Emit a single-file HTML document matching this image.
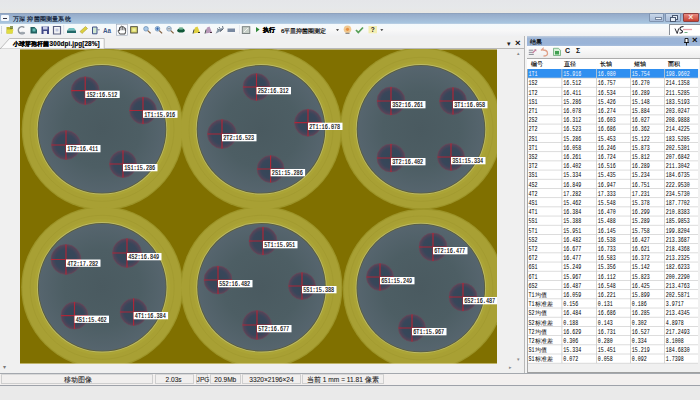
<!DOCTYPE html>
<html><head><meta charset="utf-8"><style>
*{margin:0;padding:0}
body{width:700px;height:400px;overflow:hidden;position:relative;background:#ebebeb;font-family:"Liberation Sans",sans-serif;font-size:6px}
div{position:absolute}
.th{font-size:6.2px;color:#000;-webkit-text-stroke:0.12px #000;line-height:8px;white-space:nowrap}
.sp{top:374.3px;height:10px;border:0.6px solid #cfcfcf;border-top-color:#d8d8d8;box-sizing:border-box;background:#f1efee}
.st{top:375.3px;font-size:6.6px;line-height:9px;color:#222;-webkit-text-stroke:0.08px #222;white-space:nowrap}
.td{font-family:"Liberation Serif",serif;font-size:6.3px;-webkit-text-stroke:0.2px currentColor;line-height:7px;white-space:nowrap}
</style></head><body>
<!-- top band -->
<div style="left:0;top:0;width:700px;height:12.8px;background:linear-gradient(#e5e6e9,#e6e8ea 60%,#e9e7e3)"></div>
<!-- title bar -->
<div style="left:0;top:12.8px;width:700px;height:11px;background:linear-gradient(#8a9cb6,#96acca 12%,#a0b8d4 50%,#a8c6e0 92%,#c8d6e6)"></div>
<div style="left:1px;top:15px;width:8px;height:6px;background:#f4f7fb;border-radius:1px"></div>
<div style="left:3px;top:17.5px;width:4px;height:1px;background:#334"></div>
<div style="left:13px;top:13.5px;font-size:6.2px;color:#0e1a34;-webkit-text-stroke:0.2px #0e1a34;line-height:9px;white-space:nowrap;letter-spacing:0.2px">万深 抑菌圈测量系统</div>
<div style="left:649px;top:13px;width:15px;height:8.7px;background:linear-gradient(#c8d6e8,#a8bcd8);border:0.5px solid #8094b0;box-sizing:border-box;border-radius:1px"></div>
<div style="left:654.5px;top:16.8px;width:5.5px;height:1.5px;background:#f4f6fa;border:0.5px solid #7888a0"></div>
<div style="left:665px;top:13px;width:16px;height:8.7px;background:linear-gradient(#c8d6e8,#a8bcd8);border:0.5px solid #8094b0;box-sizing:border-box;border-radius:1px"></div>
<div style="left:672px;top:15.2px;width:3.5px;height:2.8px;background:#e8eef6;border:0.6px solid #4a5870"></div>
<div style="left:670.3px;top:16.8px;width:3.5px;height:2.8px;background:#e8eef6;border:0.6px solid #4a5870"></div>
<div style="left:683px;top:13px;width:16px;height:8.7px;background:linear-gradient(#e88a80,#c84030);border:0.5px solid #904040;box-sizing:border-box;border-radius:1px"></div>
<div style="left:688.3px;top:12.8px;font-size:8.5px;line-height:9px;color:#f8e8e0;font-weight:bold">×</div>
<!-- toolbar -->
<div style="left:0;top:23.8px;width:700px;height:12.9px;background:linear-gradient(#f4fafc,#f8f8f8 50%,#eff0f2);border-bottom:1px solid #b8bcc2;box-sizing:border-box"></div>
<div style="left:669px;top:24.2px;width:31px;height:11px;background:#fff;border-left:0.8px solid #8a9098;border-top:0.8px solid #8a9098;box-sizing:border-box"></div>
<svg width="31" height="11" style="position:absolute;left:669px;top:24px"><path d="M6 4.5l2.2 5 1.5-5" fill="none" stroke="#303038" stroke-width="1"/><path d="M14.5 2.5c-2 0-3.5 1-3.5 2.3s2.5 1.4 2.5 2.6-1.5 1.8-3 1.6" fill="none" stroke="#282830" stroke-width="1.1"/><path d="M14 5.5h9" stroke="#e8a0a8" stroke-width="1.3"/><path d="M15.5 8.5h3" stroke="#70b080" stroke-width="1"/></svg>
<div style="left:262.5px;top:25.3px;font-size:6.4px;line-height:9px;font-weight:bold;color:#000;-webkit-text-stroke:0.3px #000">执行</div>
<div style="left:281px;top:25.5px;font-size:6.1px;line-height:9px;color:#000;-webkit-text-stroke:0.18px #000;white-space:nowrap">6平皿抑菌圈测定</div>
<!-- tab strip / doc area -->
<div style="left:0;top:35.8px;width:524px;height:337px;background:#f0f0f0"></div>
<div style="left:0;top:48.3px;width:524px;height:1px;background:#b8b8b8"></div>
<svg width="120" height="14" style="position:absolute;left:0;top:36px"><path d="M0.5 12.5L9.5 2.5H104.2V12.5" fill="#fbfbfb" stroke="#a8a8a8" stroke-width="0.7"/></svg>
<div style="left:13px;top:38.8px;font-size:6.4px;line-height:9px;font-weight:bold;color:#000;-webkit-text-stroke:0.15px #000;white-space:nowrap;letter-spacing:0.1px">小球芽孢杆菌300dpi.jpg[28%]</div>
<div style="left:507px;top:38.5px;font-size:7px;line-height:9px;color:#222">▾</div>
<div style="left:515px;top:37.5px;font-size:9.5px;line-height:10px;color:#111;font-weight:bold">×</div>
<svg width="477" height="315" viewBox="20 49 477 315" style="position:absolute;left:20px;top:49px;display:block">
<defs><radialGradient id="pg"><stop offset="0" stop-color="#4a5a60"/><stop offset="0.6" stop-color="#4d5e64"/><stop offset="1" stop-color="#56656e"/></radialGradient><radialGradient id="zg"><stop offset="0" stop-color="#344656"/><stop offset="0.7" stop-color="#38465a"/><stop offset="1" stop-color="#5a4458"/></radialGradient></defs>
<rect x="20" y="49" width="477" height="315" fill="#807000"/>
<rect x="20" y="49" width="477" height="1" fill="#b8ae70"/>
<circle cx="102.7" cy="129.3" r="81" fill="#9c9428"/>
<circle cx="261" cy="129.3" r="81" fill="#9c9428"/>
<circle cx="421" cy="128.5" r="81" fill="#9c9428"/>
<circle cx="102.2" cy="287.3" r="81" fill="#9c9428"/>
<circle cx="261.5" cy="287.3" r="81" fill="#9c9428"/>
<circle cx="423.8" cy="289.5" r="81" fill="#9c9428"/>
<circle cx="102.7" cy="129.3" r="79.8" fill="#a8a034"/>
<circle cx="261" cy="129.3" r="79.8" fill="#a8a034"/>
<circle cx="421" cy="128.5" r="79.8" fill="#a8a034"/>
<circle cx="102.2" cy="287.3" r="79.8" fill="#a8a034"/>
<circle cx="261.5" cy="287.3" r="79.8" fill="#a8a034"/>
<circle cx="423.8" cy="289.5" r="79.8" fill="#a8a034"/>
<circle cx="102" cy="129.3" r="72" fill="none" stroke="#9c942a" stroke-width="0.8" opacity="0.5"/>
<circle cx="102" cy="129.3" r="68" fill="#aba436"/>
<circle cx="102" cy="129.3" r="65.2" fill="#bcba66"/>
<circle cx="102" cy="129.3" r="64.3" fill="#5a5c3a"/>
<circle cx="102" cy="129.3" r="63.5" fill="url(#pg)"/>
<circle cx="261" cy="129.3" r="72" fill="none" stroke="#9c942a" stroke-width="0.8" opacity="0.5"/>
<circle cx="261" cy="129.3" r="68" fill="#aba436"/>
<circle cx="261" cy="129.3" r="65.2" fill="#bcba66"/>
<circle cx="261" cy="129.3" r="64.3" fill="#5a5c3a"/>
<circle cx="261" cy="129.3" r="63.5" fill="url(#pg)"/>
<circle cx="421" cy="129.3" r="72" fill="none" stroke="#9c942a" stroke-width="0.8" opacity="0.5"/>
<circle cx="421" cy="129.3" r="68" fill="#aba436"/>
<circle cx="421" cy="129.3" r="65.2" fill="#bcba66"/>
<circle cx="421" cy="129.3" r="64.3" fill="#5a5c3a"/>
<circle cx="421" cy="129.3" r="63.5" fill="url(#pg)"/>
<circle cx="102.2" cy="287.3" r="72" fill="none" stroke="#9c942a" stroke-width="0.8" opacity="0.5"/>
<circle cx="102.2" cy="287.3" r="68" fill="#aba436"/>
<circle cx="102.2" cy="287.3" r="65.2" fill="#bcba66"/>
<circle cx="102.2" cy="287.3" r="64.3" fill="#5a5c3a"/>
<circle cx="102.2" cy="287.3" r="63.5" fill="url(#pg)"/>
<circle cx="261.5" cy="287.3" r="72" fill="none" stroke="#9c942a" stroke-width="0.8" opacity="0.5"/>
<circle cx="261.5" cy="287.3" r="68" fill="#aba436"/>
<circle cx="261.5" cy="287.3" r="65.2" fill="#bcba66"/>
<circle cx="261.5" cy="287.3" r="64.3" fill="#5a5c3a"/>
<circle cx="261.5" cy="287.3" r="63.5" fill="url(#pg)"/>
<circle cx="420.8" cy="288" r="72" fill="none" stroke="#9c942a" stroke-width="0.8" opacity="0.5"/>
<circle cx="420.8" cy="288" r="68" fill="#aba436"/>
<circle cx="420.8" cy="288" r="65.2" fill="#bcba66"/>
<circle cx="420.8" cy="288" r="64.3" fill="#5a5c3a"/>
<circle cx="420.8" cy="288" r="63.5" fill="url(#pg)"/>
<circle cx="85.2" cy="90.7" r="14" fill="url(#zg)" stroke="#6a4858" stroke-width="1" stroke-opacity="0.6"/>
<path d="M71.2 90.7H99.2M85.2 76.7V104.7" stroke="#c82030" stroke-width="1.2" opacity="0.8"/>
<circle cx="143" cy="110.5" r="13.5" fill="url(#zg)" stroke="#6a4858" stroke-width="1" stroke-opacity="0.6"/>
<path d="M129.5 110.5H156.5M143 97.0V124.0" stroke="#c82030" stroke-width="1.2" opacity="0.8"/>
<circle cx="66" cy="145" r="14.5" fill="url(#zg)" stroke="#6a4858" stroke-width="1" stroke-opacity="0.6"/>
<path d="M51.5 145H80.5M66 130.5V159.5" stroke="#c82030" stroke-width="1.2" opacity="0.8"/>
<circle cx="123" cy="164" r="13.5" fill="url(#zg)" stroke="#6a4858" stroke-width="1" stroke-opacity="0.6"/>
<path d="M109.5 164H136.5M123 150.5V177.5" stroke="#c82030" stroke-width="1.2" opacity="0.8"/>
<circle cx="256.5" cy="87" r="13.5" fill="url(#zg)" stroke="#6a4858" stroke-width="1" stroke-opacity="0.6"/>
<path d="M243.0 87H270.0M256.5 73.5V100.5" stroke="#c82030" stroke-width="1.2" opacity="0.8"/>
<circle cx="308" cy="122.7" r="13.5" fill="url(#zg)" stroke="#6a4858" stroke-width="1" stroke-opacity="0.6"/>
<path d="M294.5 122.7H321.5M308 109.2V136.2" stroke="#c82030" stroke-width="1.2" opacity="0.8"/>
<circle cx="222" cy="134" r="14.5" fill="url(#zg)" stroke="#6a4858" stroke-width="1" stroke-opacity="0.6"/>
<path d="M207.5 134H236.5M222 119.5V148.5" stroke="#c82030" stroke-width="1.2" opacity="0.8"/>
<circle cx="270.6" cy="169" r="13.5" fill="url(#zg)" stroke="#6a4858" stroke-width="1" stroke-opacity="0.6"/>
<path d="M257.1 169H284.1M270.6 155.5V182.5" stroke="#c82030" stroke-width="1.2" opacity="0.8"/>
<circle cx="391" cy="101" r="14" fill="url(#zg)" stroke="#6a4858" stroke-width="1" stroke-opacity="0.6"/>
<path d="M377 101H405M391 87V115" stroke="#c82030" stroke-width="1.2" opacity="0.8"/>
<circle cx="453" cy="101" r="13.5" fill="url(#zg)" stroke="#6a4858" stroke-width="1" stroke-opacity="0.6"/>
<path d="M439.5 101H466.5M453 87.5V114.5" stroke="#c82030" stroke-width="1.2" opacity="0.8"/>
<circle cx="391" cy="158" r="14" fill="url(#zg)" stroke="#6a4858" stroke-width="1" stroke-opacity="0.6"/>
<path d="M377 158H405M391 144V172" stroke="#c82030" stroke-width="1.2" opacity="0.8"/>
<circle cx="451" cy="157" r="13.5" fill="url(#zg)" stroke="#6a4858" stroke-width="1" stroke-opacity="0.6"/>
<path d="M437.5 157H464.5M451 143.5V170.5" stroke="#c82030" stroke-width="1.2" opacity="0.8"/>
<circle cx="66" cy="259.5" r="15" fill="url(#zg)" stroke="#6a4858" stroke-width="1" stroke-opacity="0.6"/>
<path d="M51 259.5H81M66 244.5V274.5" stroke="#c82030" stroke-width="1.2" opacity="0.8"/>
<circle cx="127" cy="253" r="14.5" fill="url(#zg)" stroke="#6a4858" stroke-width="1" stroke-opacity="0.6"/>
<path d="M112.5 253H141.5M127 238.5V267.5" stroke="#c82030" stroke-width="1.2" opacity="0.8"/>
<circle cx="74.5" cy="315.6" r="13.5" fill="url(#zg)" stroke="#6a4858" stroke-width="1" stroke-opacity="0.6"/>
<path d="M61.0 315.6H88.0M74.5 302.1V329.1" stroke="#c82030" stroke-width="1.2" opacity="0.8"/>
<circle cx="133.6" cy="312" r="13.5" fill="url(#zg)" stroke="#6a4858" stroke-width="1" stroke-opacity="0.6"/>
<path d="M120.1 312H147.1M133.6 298.5V325.5" stroke="#c82030" stroke-width="1.2" opacity="0.8"/>
<circle cx="263" cy="241" r="14" fill="url(#zg)" stroke="#6a4858" stroke-width="1" stroke-opacity="0.6"/>
<path d="M249 241H277M263 227V255" stroke="#c82030" stroke-width="1.2" opacity="0.8"/>
<circle cx="218" cy="280" r="14" fill="url(#zg)" stroke="#6a4858" stroke-width="1" stroke-opacity="0.6"/>
<path d="M204 280H232M218 266V294" stroke="#c82030" stroke-width="1.2" opacity="0.8"/>
<circle cx="302" cy="286" r="13.5" fill="url(#zg)" stroke="#6a4858" stroke-width="1" stroke-opacity="0.6"/>
<path d="M288.5 286H315.5M302 272.5V299.5" stroke="#c82030" stroke-width="1.2" opacity="0.8"/>
<circle cx="257" cy="325" r="14.5" fill="url(#zg)" stroke="#6a4858" stroke-width="1" stroke-opacity="0.6"/>
<path d="M242.5 325H271.5M257 310.5V339.5" stroke="#c82030" stroke-width="1.2" opacity="0.8"/>
<circle cx="433" cy="247" r="14" fill="url(#zg)" stroke="#6a4858" stroke-width="1" stroke-opacity="0.6"/>
<path d="M419 247H447M433 233V261" stroke="#c82030" stroke-width="1.2" opacity="0.8"/>
<circle cx="380" cy="277" r="13.5" fill="url(#zg)" stroke="#6a4858" stroke-width="1" stroke-opacity="0.6"/>
<path d="M366.5 277H393.5M380 263.5V290.5" stroke="#c82030" stroke-width="1.2" opacity="0.8"/>
<circle cx="463" cy="297" r="14" fill="url(#zg)" stroke="#6a4858" stroke-width="1" stroke-opacity="0.6"/>
<path d="M449 297H477M463 283V311" stroke="#c82030" stroke-width="1.2" opacity="0.8"/>
<circle cx="412" cy="328" r="13.5" fill="url(#zg)" stroke="#6a4858" stroke-width="1" stroke-opacity="0.6"/>
<path d="M398.5 328H425.5M412 314.5V341.5" stroke="#c82030" stroke-width="1.2" opacity="0.8"/>
<rect x="85.2" y="90.7" width="34.5" height="7.3" fill="#fff"/>
<text x="86.4" y="96.7" font-family="Liberation Mono" font-size="6.5" textLength="31" lengthAdjust="spacingAndGlyphs" fill="#000" stroke="#000" stroke-width="0.15">1S2:16.512</text>
<rect x="143" y="110.5" width="34.5" height="7.3" fill="#fff"/>
<text x="144.2" y="116.5" font-family="Liberation Mono" font-size="6.5" textLength="31" lengthAdjust="spacingAndGlyphs" fill="#000" stroke="#000" stroke-width="0.15">1T1:15.916</text>
<rect x="66" y="145" width="34.5" height="7.3" fill="#fff"/>
<text x="67.2" y="151" font-family="Liberation Mono" font-size="6.5" textLength="31" lengthAdjust="spacingAndGlyphs" fill="#000" stroke="#000" stroke-width="0.15">1T2:16.411</text>
<rect x="123" y="164" width="34.5" height="7.3" fill="#fff"/>
<text x="124.2" y="170" font-family="Liberation Mono" font-size="6.5" textLength="31" lengthAdjust="spacingAndGlyphs" fill="#000" stroke="#000" stroke-width="0.15">1S1:15.286</text>
<rect x="256.5" y="87" width="34.5" height="7.3" fill="#fff"/>
<text x="257.7" y="93" font-family="Liberation Mono" font-size="6.5" textLength="31" lengthAdjust="spacingAndGlyphs" fill="#000" stroke="#000" stroke-width="0.15">2S2:16.312</text>
<rect x="308" y="122.7" width="34.5" height="7.3" fill="#fff"/>
<text x="309.2" y="128.7" font-family="Liberation Mono" font-size="6.5" textLength="31" lengthAdjust="spacingAndGlyphs" fill="#000" stroke="#000" stroke-width="0.15">2T1:16.078</text>
<rect x="222" y="134" width="34.5" height="7.3" fill="#fff"/>
<text x="223.2" y="140" font-family="Liberation Mono" font-size="6.5" textLength="31" lengthAdjust="spacingAndGlyphs" fill="#000" stroke="#000" stroke-width="0.15">2T2:16.523</text>
<rect x="270.6" y="169" width="34.5" height="7.3" fill="#fff"/>
<text x="271.8" y="175" font-family="Liberation Mono" font-size="6.5" textLength="31" lengthAdjust="spacingAndGlyphs" fill="#000" stroke="#000" stroke-width="0.15">2S1:15.286</text>
<rect x="391" y="101" width="34.5" height="7.3" fill="#fff"/>
<text x="392.2" y="107" font-family="Liberation Mono" font-size="6.5" textLength="31" lengthAdjust="spacingAndGlyphs" fill="#000" stroke="#000" stroke-width="0.15">3S2:16.261</text>
<rect x="453" y="101" width="34.5" height="7.3" fill="#fff"/>
<text x="454.2" y="107" font-family="Liberation Mono" font-size="6.5" textLength="31" lengthAdjust="spacingAndGlyphs" fill="#000" stroke="#000" stroke-width="0.15">3T1:16.058</text>
<rect x="391" y="158" width="34.5" height="7.3" fill="#fff"/>
<text x="392.2" y="164" font-family="Liberation Mono" font-size="6.5" textLength="31" lengthAdjust="spacingAndGlyphs" fill="#000" stroke="#000" stroke-width="0.15">3T2:16.402</text>
<rect x="451" y="157" width="34.5" height="7.3" fill="#fff"/>
<text x="452.2" y="163" font-family="Liberation Mono" font-size="6.5" textLength="31" lengthAdjust="spacingAndGlyphs" fill="#000" stroke="#000" stroke-width="0.15">3S1:15.334</text>
<rect x="66" y="259.5" width="34.5" height="7.3" fill="#fff"/>
<text x="67.2" y="265.5" font-family="Liberation Mono" font-size="6.5" textLength="31" lengthAdjust="spacingAndGlyphs" fill="#000" stroke="#000" stroke-width="0.15">4T2:17.282</text>
<rect x="127" y="253" width="34.5" height="7.3" fill="#fff"/>
<text x="128.2" y="259" font-family="Liberation Mono" font-size="6.5" textLength="31" lengthAdjust="spacingAndGlyphs" fill="#000" stroke="#000" stroke-width="0.15">4S2:16.849</text>
<rect x="74.5" y="315.6" width="34.5" height="7.3" fill="#fff"/>
<text x="75.7" y="321.6" font-family="Liberation Mono" font-size="6.5" textLength="31" lengthAdjust="spacingAndGlyphs" fill="#000" stroke="#000" stroke-width="0.15">4S1:15.462</text>
<rect x="133.6" y="312" width="34.5" height="7.3" fill="#fff"/>
<text x="134.79999999999998" y="318" font-family="Liberation Mono" font-size="6.5" textLength="31" lengthAdjust="spacingAndGlyphs" fill="#000" stroke="#000" stroke-width="0.15">4T1:16.384</text>
<rect x="263" y="241" width="34.5" height="7.3" fill="#fff"/>
<text x="264.2" y="247" font-family="Liberation Mono" font-size="6.5" textLength="31" lengthAdjust="spacingAndGlyphs" fill="#000" stroke="#000" stroke-width="0.15">5T1:15.951</text>
<rect x="218" y="280" width="34.5" height="7.3" fill="#fff"/>
<text x="219.2" y="286" font-family="Liberation Mono" font-size="6.5" textLength="31" lengthAdjust="spacingAndGlyphs" fill="#000" stroke="#000" stroke-width="0.15">5S2:16.482</text>
<rect x="302" y="286" width="34.5" height="7.3" fill="#fff"/>
<text x="303.2" y="292" font-family="Liberation Mono" font-size="6.5" textLength="31" lengthAdjust="spacingAndGlyphs" fill="#000" stroke="#000" stroke-width="0.15">5S1:15.388</text>
<rect x="257" y="325" width="34.5" height="7.3" fill="#fff"/>
<text x="258.2" y="331" font-family="Liberation Mono" font-size="6.5" textLength="31" lengthAdjust="spacingAndGlyphs" fill="#000" stroke="#000" stroke-width="0.15">5T2:16.677</text>
<rect x="433" y="247" width="34.5" height="7.3" fill="#fff"/>
<text x="434.2" y="253" font-family="Liberation Mono" font-size="6.5" textLength="31" lengthAdjust="spacingAndGlyphs" fill="#000" stroke="#000" stroke-width="0.15">6T2:16.477</text>
<rect x="380" y="277" width="34.5" height="7.3" fill="#fff"/>
<text x="381.2" y="283" font-family="Liberation Mono" font-size="6.5" textLength="31" lengthAdjust="spacingAndGlyphs" fill="#000" stroke="#000" stroke-width="0.15">6S1:15.249</text>
<rect x="463" y="297" width="34.5" height="7.3" fill="#fff"/>
<text x="464.2" y="303" font-family="Liberation Mono" font-size="6.5" textLength="31" lengthAdjust="spacingAndGlyphs" fill="#000" stroke="#000" stroke-width="0.15">6S2:16.487</text>
<rect x="412" y="328" width="34.5" height="7.3" fill="#fff"/>
<text x="413.2" y="334" font-family="Liberation Mono" font-size="6.5" textLength="31" lengthAdjust="spacingAndGlyphs" fill="#000" stroke="#000" stroke-width="0.15">6T1:15.967</text>
<rect x="20" y="363.4" width="477" height="0.6" fill="#e8e0b0"/>
</svg>
<div style="left:517px;top:50px;font-size:5px;color:#888">▴</div>
<div style="left:517px;top:356px;font-size:5px;color:#888">▾</div>
<div style="left:2.5px;top:364px;font-size:5.5px;color:#777">▾</div>
<div style="left:509px;top:364px;font-size:5px;color:#888">▸</div>
<div style="left:0;top:372.5px;width:524px;height:1px;background:#a8a8a8"></div>
<div style="left:524px;top:35.8px;width:1px;height:337px;background:#b8b8b8"></div>
<div style="left:525px;top:35.8px;width:2px;height:337px;background:#f4f4f4"></div>
<!-- results panel -->
<div style="left:527px;top:35.8px;width:173px;height:337.2px;background:#f0f0f0;border-left:1px solid #a8a8a8;border-bottom:1px solid #a0a0a0;box-sizing:border-box"></div>
<div style="left:527px;top:36px;width:173px;height:10px;background:linear-gradient(#c0cede,#9cb4d6 25%,#9ab4d8 80%,#a8bedc)"></div>
<div style="left:530px;top:36.6px;font-size:6.2px;line-height:9px;color:#000;-webkit-text-stroke:0.15px #000">结果</div>
<svg width="8" height="9" style="position:absolute;left:683px;top:36.5px"><path d="M2 1.5h3v4h-3zM1 5.5h5M3.5 5.5v3" fill="#fff" stroke="#111" stroke-width="0.9"/></svg>
<div style="left:692px;top:35.3px;font-size:9.5px;line-height:10px;color:#111;font-weight:bold">×</div>
<div style="left:527px;top:46px;width:173px;height:12.5px;background:linear-gradient(#fdfdfd,#f4f4f4 60%,#ececec);border-bottom:1px solid #acacac;box-sizing:border-box"></div>
<div style="left:565px;top:46px;font-size:7px;line-height:10px;font-weight:bold;color:#111">C</div>
<div style="left:576px;top:46px;font-size:7px;line-height:10px;font-weight:bold;color:#111">Σ</div>
<div style="position:absolute;left:527px;top:58.5px;width:172px;height:10.3px;background:#fff"></div>
<div class="th" style="left:531px;top:59.7px">编号</div>
<div class="th" style="left:563.5px;top:59.7px">直径</div>
<div class="th" style="left:600px;top:59.7px">长轴</div>
<div class="th" style="left:633.6px;top:59.7px">短轴</div>
<div class="th" style="left:668px;top:59.7px">面积</div>
<div style="position:absolute;left:528px;top:68.80px;width:170px;height:294.30px;background:#fff"></div>
<div style="position:absolute;left:528px;top:68.80px;width:170px;height:9.20px;background:#2f8ff0"></div>
<svg width="700" height="400" viewBox="0 0 700 400" style="position:absolute;left:0;top:0">
<rect x="528" y="77.70" width="170" height="0.8" fill="#d4d4d4"/>
<rect x="528" y="86.89" width="170" height="0.8" fill="#d4d4d4"/>
<rect x="528" y="96.09" width="170" height="0.8" fill="#d4d4d4"/>
<rect x="528" y="105.29" width="170" height="0.8" fill="#d4d4d4"/>
<rect x="528" y="114.48" width="170" height="0.8" fill="#d4d4d4"/>
<rect x="528" y="123.68" width="170" height="0.8" fill="#d4d4d4"/>
<rect x="528" y="132.88" width="170" height="0.8" fill="#d4d4d4"/>
<rect x="528" y="142.08" width="170" height="0.8" fill="#d4d4d4"/>
<rect x="528" y="151.27" width="170" height="0.8" fill="#d4d4d4"/>
<rect x="528" y="160.47" width="170" height="0.8" fill="#d4d4d4"/>
<rect x="528" y="169.67" width="170" height="0.8" fill="#d4d4d4"/>
<rect x="528" y="178.86" width="170" height="0.8" fill="#d4d4d4"/>
<rect x="528" y="188.06" width="170" height="0.8" fill="#d4d4d4"/>
<rect x="528" y="197.26" width="170" height="0.8" fill="#d4d4d4"/>
<rect x="528" y="206.45" width="170" height="0.8" fill="#d4d4d4"/>
<rect x="528" y="215.65" width="170" height="0.8" fill="#d4d4d4"/>
<rect x="528" y="224.85" width="170" height="0.8" fill="#d4d4d4"/>
<rect x="528" y="234.05" width="170" height="0.8" fill="#d4d4d4"/>
<rect x="528" y="243.24" width="170" height="0.8" fill="#d4d4d4"/>
<rect x="528" y="252.44" width="170" height="0.8" fill="#d4d4d4"/>
<rect x="528" y="261.64" width="170" height="0.8" fill="#d4d4d4"/>
<rect x="528" y="270.83" width="170" height="0.8" fill="#d4d4d4"/>
<rect x="528" y="280.03" width="170" height="0.8" fill="#d4d4d4"/>
<rect x="528" y="289.23" width="170" height="0.8" fill="#d4d4d4"/>
<rect x="528" y="298.42" width="170" height="0.8" fill="#d4d4d4"/>
<rect x="528" y="307.62" width="170" height="0.8" fill="#d4d4d4"/>
<rect x="528" y="316.82" width="170" height="0.8" fill="#d4d4d4"/>
<rect x="528" y="326.02" width="170" height="0.8" fill="#d4d4d4"/>
<rect x="528" y="335.21" width="170" height="0.8" fill="#d4d4d4"/>
<rect x="528" y="344.41" width="170" height="0.8" fill="#d4d4d4"/>
<rect x="528" y="353.61" width="170" height="0.8" fill="#d4d4d4"/>
<rect x="528" y="362.80" width="170" height="0.8" fill="#d4d4d4"/>
<rect x="561.5" y="68.80" width="0.8" height="294.30" fill="#cbcbcb"/>
<rect x="596" y="68.80" width="0.8" height="294.30" fill="#cbcbcb"/>
<rect x="630" y="68.80" width="0.8" height="294.30" fill="#cbcbcb"/>
<rect x="664" y="68.80" width="0.8" height="294.30" fill="#cbcbcb"/>
<text x="528.5" y="76.20" font-family="Liberation Mono" font-size="6.5" fill="#f4f8ff" stroke="#f4f8ff" stroke-width="0.0" textLength="9.0" lengthAdjust="spacingAndGlyphs">1T1</text>
<text x="563.3" y="76.20" font-family="Liberation Mono" font-size="6.5" fill="#f4f8ff" stroke="#f4f8ff" stroke-width="0.0" textLength="18.0" lengthAdjust="spacingAndGlyphs">15.916</text>
<text x="597.8" y="76.20" font-family="Liberation Mono" font-size="6.5" fill="#f4f8ff" stroke="#f4f8ff" stroke-width="0.0" textLength="18.0" lengthAdjust="spacingAndGlyphs">16.080</text>
<text x="631.8" y="76.20" font-family="Liberation Mono" font-size="6.5" fill="#f4f8ff" stroke="#f4f8ff" stroke-width="0.0" textLength="18.0" lengthAdjust="spacingAndGlyphs">15.754</text>
<text x="665.8" y="76.20" font-family="Liberation Mono" font-size="6.5" fill="#f4f8ff" stroke="#f4f8ff" stroke-width="0.0" textLength="24.0" lengthAdjust="spacingAndGlyphs">198.9602</text>
<text x="528.5" y="85.40" font-family="Liberation Mono" font-size="6.5" fill="#000" stroke="#000" stroke-width="0.0" textLength="9.0" lengthAdjust="spacingAndGlyphs">1S2</text>
<text x="563.3" y="85.40" font-family="Liberation Mono" font-size="6.5" fill="#000" stroke="#000" stroke-width="0.0" textLength="18.0" lengthAdjust="spacingAndGlyphs">16.512</text>
<text x="597.8" y="85.40" font-family="Liberation Mono" font-size="6.5" fill="#000" stroke="#000" stroke-width="0.0" textLength="18.0" lengthAdjust="spacingAndGlyphs">16.757</text>
<text x="631.8" y="85.40" font-family="Liberation Mono" font-size="6.5" fill="#000" stroke="#000" stroke-width="0.0" textLength="18.0" lengthAdjust="spacingAndGlyphs">16.270</text>
<text x="665.8" y="85.40" font-family="Liberation Mono" font-size="6.5" fill="#000" stroke="#000" stroke-width="0.0" textLength="24.0" lengthAdjust="spacingAndGlyphs">214.1358</text>
<text x="528.5" y="94.59" font-family="Liberation Mono" font-size="6.5" fill="#000" stroke="#000" stroke-width="0.0" textLength="9.0" lengthAdjust="spacingAndGlyphs">1T2</text>
<text x="563.3" y="94.59" font-family="Liberation Mono" font-size="6.5" fill="#000" stroke="#000" stroke-width="0.0" textLength="18.0" lengthAdjust="spacingAndGlyphs">16.411</text>
<text x="597.8" y="94.59" font-family="Liberation Mono" font-size="6.5" fill="#000" stroke="#000" stroke-width="0.0" textLength="18.0" lengthAdjust="spacingAndGlyphs">16.534</text>
<text x="631.8" y="94.59" font-family="Liberation Mono" font-size="6.5" fill="#000" stroke="#000" stroke-width="0.0" textLength="18.0" lengthAdjust="spacingAndGlyphs">16.289</text>
<text x="665.8" y="94.59" font-family="Liberation Mono" font-size="6.5" fill="#000" stroke="#000" stroke-width="0.0" textLength="24.0" lengthAdjust="spacingAndGlyphs">211.5285</text>
<text x="528.5" y="103.79" font-family="Liberation Mono" font-size="6.5" fill="#000" stroke="#000" stroke-width="0.0" textLength="9.0" lengthAdjust="spacingAndGlyphs">1S1</text>
<text x="563.3" y="103.79" font-family="Liberation Mono" font-size="6.5" fill="#000" stroke="#000" stroke-width="0.0" textLength="18.0" lengthAdjust="spacingAndGlyphs">15.286</text>
<text x="597.8" y="103.79" font-family="Liberation Mono" font-size="6.5" fill="#000" stroke="#000" stroke-width="0.0" textLength="18.0" lengthAdjust="spacingAndGlyphs">15.426</text>
<text x="631.8" y="103.79" font-family="Liberation Mono" font-size="6.5" fill="#000" stroke="#000" stroke-width="0.0" textLength="18.0" lengthAdjust="spacingAndGlyphs">15.148</text>
<text x="665.8" y="103.79" font-family="Liberation Mono" font-size="6.5" fill="#000" stroke="#000" stroke-width="0.0" textLength="24.0" lengthAdjust="spacingAndGlyphs">183.5193</text>
<text x="528.5" y="112.99" font-family="Liberation Mono" font-size="6.5" fill="#000" stroke="#000" stroke-width="0.0" textLength="9.0" lengthAdjust="spacingAndGlyphs">2T1</text>
<text x="563.3" y="112.99" font-family="Liberation Mono" font-size="6.5" fill="#000" stroke="#000" stroke-width="0.0" textLength="18.0" lengthAdjust="spacingAndGlyphs">16.078</text>
<text x="597.8" y="112.99" font-family="Liberation Mono" font-size="6.5" fill="#000" stroke="#000" stroke-width="0.0" textLength="18.0" lengthAdjust="spacingAndGlyphs">16.274</text>
<text x="631.8" y="112.99" font-family="Liberation Mono" font-size="6.5" fill="#000" stroke="#000" stroke-width="0.0" textLength="18.0" lengthAdjust="spacingAndGlyphs">15.884</text>
<text x="665.8" y="112.99" font-family="Liberation Mono" font-size="6.5" fill="#000" stroke="#000" stroke-width="0.0" textLength="24.0" lengthAdjust="spacingAndGlyphs">203.0247</text>
<text x="528.5" y="122.19" font-family="Liberation Mono" font-size="6.5" fill="#000" stroke="#000" stroke-width="0.0" textLength="9.0" lengthAdjust="spacingAndGlyphs">2S2</text>
<text x="563.3" y="122.19" font-family="Liberation Mono" font-size="6.5" fill="#000" stroke="#000" stroke-width="0.0" textLength="18.0" lengthAdjust="spacingAndGlyphs">16.312</text>
<text x="597.8" y="122.19" font-family="Liberation Mono" font-size="6.5" fill="#000" stroke="#000" stroke-width="0.0" textLength="18.0" lengthAdjust="spacingAndGlyphs">16.603</text>
<text x="631.8" y="122.19" font-family="Liberation Mono" font-size="6.5" fill="#000" stroke="#000" stroke-width="0.0" textLength="18.0" lengthAdjust="spacingAndGlyphs">16.027</text>
<text x="665.8" y="122.19" font-family="Liberation Mono" font-size="6.5" fill="#000" stroke="#000" stroke-width="0.0" textLength="24.0" lengthAdjust="spacingAndGlyphs">208.9888</text>
<text x="528.5" y="131.38" font-family="Liberation Mono" font-size="6.5" fill="#000" stroke="#000" stroke-width="0.0" textLength="9.0" lengthAdjust="spacingAndGlyphs">2T2</text>
<text x="563.3" y="131.38" font-family="Liberation Mono" font-size="6.5" fill="#000" stroke="#000" stroke-width="0.0" textLength="18.0" lengthAdjust="spacingAndGlyphs">16.523</text>
<text x="597.8" y="131.38" font-family="Liberation Mono" font-size="6.5" fill="#000" stroke="#000" stroke-width="0.0" textLength="18.0" lengthAdjust="spacingAndGlyphs">16.686</text>
<text x="631.8" y="131.38" font-family="Liberation Mono" font-size="6.5" fill="#000" stroke="#000" stroke-width="0.0" textLength="18.0" lengthAdjust="spacingAndGlyphs">16.362</text>
<text x="665.8" y="131.38" font-family="Liberation Mono" font-size="6.5" fill="#000" stroke="#000" stroke-width="0.0" textLength="24.0" lengthAdjust="spacingAndGlyphs">214.4225</text>
<text x="528.5" y="140.58" font-family="Liberation Mono" font-size="6.5" fill="#000" stroke="#000" stroke-width="0.0" textLength="9.0" lengthAdjust="spacingAndGlyphs">2S1</text>
<text x="563.3" y="140.58" font-family="Liberation Mono" font-size="6.5" fill="#000" stroke="#000" stroke-width="0.0" textLength="18.0" lengthAdjust="spacingAndGlyphs">15.286</text>
<text x="597.8" y="140.58" font-family="Liberation Mono" font-size="6.5" fill="#000" stroke="#000" stroke-width="0.0" textLength="18.0" lengthAdjust="spacingAndGlyphs">15.453</text>
<text x="631.8" y="140.58" font-family="Liberation Mono" font-size="6.5" fill="#000" stroke="#000" stroke-width="0.0" textLength="18.0" lengthAdjust="spacingAndGlyphs">15.122</text>
<text x="665.8" y="140.58" font-family="Liberation Mono" font-size="6.5" fill="#000" stroke="#000" stroke-width="0.0" textLength="24.0" lengthAdjust="spacingAndGlyphs">183.5285</text>
<text x="528.5" y="149.78" font-family="Liberation Mono" font-size="6.5" fill="#000" stroke="#000" stroke-width="0.0" textLength="9.0" lengthAdjust="spacingAndGlyphs">3T1</text>
<text x="563.3" y="149.78" font-family="Liberation Mono" font-size="6.5" fill="#000" stroke="#000" stroke-width="0.0" textLength="18.0" lengthAdjust="spacingAndGlyphs">16.058</text>
<text x="597.8" y="149.78" font-family="Liberation Mono" font-size="6.5" fill="#000" stroke="#000" stroke-width="0.0" textLength="18.0" lengthAdjust="spacingAndGlyphs">16.246</text>
<text x="631.8" y="149.78" font-family="Liberation Mono" font-size="6.5" fill="#000" stroke="#000" stroke-width="0.0" textLength="18.0" lengthAdjust="spacingAndGlyphs">15.873</text>
<text x="665.8" y="149.78" font-family="Liberation Mono" font-size="6.5" fill="#000" stroke="#000" stroke-width="0.0" textLength="24.0" lengthAdjust="spacingAndGlyphs">202.5301</text>
<text x="528.5" y="158.97" font-family="Liberation Mono" font-size="6.5" fill="#000" stroke="#000" stroke-width="0.0" textLength="9.0" lengthAdjust="spacingAndGlyphs">3S2</text>
<text x="563.3" y="158.97" font-family="Liberation Mono" font-size="6.5" fill="#000" stroke="#000" stroke-width="0.0" textLength="18.0" lengthAdjust="spacingAndGlyphs">16.261</text>
<text x="597.8" y="158.97" font-family="Liberation Mono" font-size="6.5" fill="#000" stroke="#000" stroke-width="0.0" textLength="18.0" lengthAdjust="spacingAndGlyphs">16.724</text>
<text x="631.8" y="158.97" font-family="Liberation Mono" font-size="6.5" fill="#000" stroke="#000" stroke-width="0.0" textLength="18.0" lengthAdjust="spacingAndGlyphs">15.812</text>
<text x="665.8" y="158.97" font-family="Liberation Mono" font-size="6.5" fill="#000" stroke="#000" stroke-width="0.0" textLength="24.0" lengthAdjust="spacingAndGlyphs">207.6842</text>
<text x="528.5" y="168.17" font-family="Liberation Mono" font-size="6.5" fill="#000" stroke="#000" stroke-width="0.0" textLength="9.0" lengthAdjust="spacingAndGlyphs">3T2</text>
<text x="563.3" y="168.17" font-family="Liberation Mono" font-size="6.5" fill="#000" stroke="#000" stroke-width="0.0" textLength="18.0" lengthAdjust="spacingAndGlyphs">16.402</text>
<text x="597.8" y="168.17" font-family="Liberation Mono" font-size="6.5" fill="#000" stroke="#000" stroke-width="0.0" textLength="18.0" lengthAdjust="spacingAndGlyphs">16.516</text>
<text x="631.8" y="168.17" font-family="Liberation Mono" font-size="6.5" fill="#000" stroke="#000" stroke-width="0.0" textLength="18.0" lengthAdjust="spacingAndGlyphs">16.289</text>
<text x="665.8" y="168.17" font-family="Liberation Mono" font-size="6.5" fill="#000" stroke="#000" stroke-width="0.0" textLength="24.0" lengthAdjust="spacingAndGlyphs">211.3042</text>
<text x="528.5" y="177.37" font-family="Liberation Mono" font-size="6.5" fill="#000" stroke="#000" stroke-width="0.0" textLength="9.0" lengthAdjust="spacingAndGlyphs">3S1</text>
<text x="563.3" y="177.37" font-family="Liberation Mono" font-size="6.5" fill="#000" stroke="#000" stroke-width="0.0" textLength="18.0" lengthAdjust="spacingAndGlyphs">15.334</text>
<text x="597.8" y="177.37" font-family="Liberation Mono" font-size="6.5" fill="#000" stroke="#000" stroke-width="0.0" textLength="18.0" lengthAdjust="spacingAndGlyphs">15.435</text>
<text x="631.8" y="177.37" font-family="Liberation Mono" font-size="6.5" fill="#000" stroke="#000" stroke-width="0.0" textLength="18.0" lengthAdjust="spacingAndGlyphs">15.234</text>
<text x="665.8" y="177.37" font-family="Liberation Mono" font-size="6.5" fill="#000" stroke="#000" stroke-width="0.0" textLength="24.0" lengthAdjust="spacingAndGlyphs">184.6735</text>
<text x="528.5" y="186.56" font-family="Liberation Mono" font-size="6.5" fill="#000" stroke="#000" stroke-width="0.0" textLength="9.0" lengthAdjust="spacingAndGlyphs">4S2</text>
<text x="563.3" y="186.56" font-family="Liberation Mono" font-size="6.5" fill="#000" stroke="#000" stroke-width="0.0" textLength="18.0" lengthAdjust="spacingAndGlyphs">16.849</text>
<text x="597.8" y="186.56" font-family="Liberation Mono" font-size="6.5" fill="#000" stroke="#000" stroke-width="0.0" textLength="18.0" lengthAdjust="spacingAndGlyphs">16.947</text>
<text x="631.8" y="186.56" font-family="Liberation Mono" font-size="6.5" fill="#000" stroke="#000" stroke-width="0.0" textLength="18.0" lengthAdjust="spacingAndGlyphs">16.751</text>
<text x="665.8" y="186.56" font-family="Liberation Mono" font-size="6.5" fill="#000" stroke="#000" stroke-width="0.0" textLength="24.0" lengthAdjust="spacingAndGlyphs">222.9530</text>
<text x="528.5" y="195.76" font-family="Liberation Mono" font-size="6.5" fill="#000" stroke="#000" stroke-width="0.0" textLength="9.0" lengthAdjust="spacingAndGlyphs">4T2</text>
<text x="563.3" y="195.76" font-family="Liberation Mono" font-size="6.5" fill="#000" stroke="#000" stroke-width="0.0" textLength="18.0" lengthAdjust="spacingAndGlyphs">17.282</text>
<text x="597.8" y="195.76" font-family="Liberation Mono" font-size="6.5" fill="#000" stroke="#000" stroke-width="0.0" textLength="18.0" lengthAdjust="spacingAndGlyphs">17.333</text>
<text x="631.8" y="195.76" font-family="Liberation Mono" font-size="6.5" fill="#000" stroke="#000" stroke-width="0.0" textLength="18.0" lengthAdjust="spacingAndGlyphs">17.231</text>
<text x="665.8" y="195.76" font-family="Liberation Mono" font-size="6.5" fill="#000" stroke="#000" stroke-width="0.0" textLength="24.0" lengthAdjust="spacingAndGlyphs">234.5730</text>
<text x="528.5" y="204.96" font-family="Liberation Mono" font-size="6.5" fill="#000" stroke="#000" stroke-width="0.0" textLength="9.0" lengthAdjust="spacingAndGlyphs">4S1</text>
<text x="563.3" y="204.96" font-family="Liberation Mono" font-size="6.5" fill="#000" stroke="#000" stroke-width="0.0" textLength="18.0" lengthAdjust="spacingAndGlyphs">15.462</text>
<text x="597.8" y="204.96" font-family="Liberation Mono" font-size="6.5" fill="#000" stroke="#000" stroke-width="0.0" textLength="18.0" lengthAdjust="spacingAndGlyphs">15.548</text>
<text x="631.8" y="204.96" font-family="Liberation Mono" font-size="6.5" fill="#000" stroke="#000" stroke-width="0.0" textLength="18.0" lengthAdjust="spacingAndGlyphs">15.378</text>
<text x="665.8" y="204.96" font-family="Liberation Mono" font-size="6.5" fill="#000" stroke="#000" stroke-width="0.0" textLength="24.0" lengthAdjust="spacingAndGlyphs">187.7702</text>
<text x="528.5" y="214.16" font-family="Liberation Mono" font-size="6.5" fill="#000" stroke="#000" stroke-width="0.0" textLength="9.0" lengthAdjust="spacingAndGlyphs">4T1</text>
<text x="563.3" y="214.16" font-family="Liberation Mono" font-size="6.5" fill="#000" stroke="#000" stroke-width="0.0" textLength="18.0" lengthAdjust="spacingAndGlyphs">16.384</text>
<text x="597.8" y="214.16" font-family="Liberation Mono" font-size="6.5" fill="#000" stroke="#000" stroke-width="0.0" textLength="18.0" lengthAdjust="spacingAndGlyphs">16.470</text>
<text x="631.8" y="214.16" font-family="Liberation Mono" font-size="6.5" fill="#000" stroke="#000" stroke-width="0.0" textLength="18.0" lengthAdjust="spacingAndGlyphs">16.299</text>
<text x="665.8" y="214.16" font-family="Liberation Mono" font-size="6.5" fill="#000" stroke="#000" stroke-width="0.0" textLength="24.0" lengthAdjust="spacingAndGlyphs">210.8383</text>
<text x="528.5" y="223.35" font-family="Liberation Mono" font-size="6.5" fill="#000" stroke="#000" stroke-width="0.0" textLength="9.0" lengthAdjust="spacingAndGlyphs">5S1</text>
<text x="563.3" y="223.35" font-family="Liberation Mono" font-size="6.5" fill="#000" stroke="#000" stroke-width="0.0" textLength="18.0" lengthAdjust="spacingAndGlyphs">15.388</text>
<text x="597.8" y="223.35" font-family="Liberation Mono" font-size="6.5" fill="#000" stroke="#000" stroke-width="0.0" textLength="18.0" lengthAdjust="spacingAndGlyphs">15.488</text>
<text x="631.8" y="223.35" font-family="Liberation Mono" font-size="6.5" fill="#000" stroke="#000" stroke-width="0.0" textLength="18.0" lengthAdjust="spacingAndGlyphs">15.289</text>
<text x="665.8" y="223.35" font-family="Liberation Mono" font-size="6.5" fill="#000" stroke="#000" stroke-width="0.0" textLength="24.0" lengthAdjust="spacingAndGlyphs">185.9853</text>
<text x="528.5" y="232.55" font-family="Liberation Mono" font-size="6.5" fill="#000" stroke="#000" stroke-width="0.0" textLength="9.0" lengthAdjust="spacingAndGlyphs">5T1</text>
<text x="563.3" y="232.55" font-family="Liberation Mono" font-size="6.5" fill="#000" stroke="#000" stroke-width="0.0" textLength="18.0" lengthAdjust="spacingAndGlyphs">15.951</text>
<text x="597.8" y="232.55" font-family="Liberation Mono" font-size="6.5" fill="#000" stroke="#000" stroke-width="0.0" textLength="18.0" lengthAdjust="spacingAndGlyphs">16.145</text>
<text x="631.8" y="232.55" font-family="Liberation Mono" font-size="6.5" fill="#000" stroke="#000" stroke-width="0.0" textLength="18.0" lengthAdjust="spacingAndGlyphs">15.758</text>
<text x="665.8" y="232.55" font-family="Liberation Mono" font-size="6.5" fill="#000" stroke="#000" stroke-width="0.0" textLength="24.0" lengthAdjust="spacingAndGlyphs">199.8204</text>
<text x="528.5" y="241.75" font-family="Liberation Mono" font-size="6.5" fill="#000" stroke="#000" stroke-width="0.0" textLength="9.0" lengthAdjust="spacingAndGlyphs">5S2</text>
<text x="563.3" y="241.75" font-family="Liberation Mono" font-size="6.5" fill="#000" stroke="#000" stroke-width="0.0" textLength="18.0" lengthAdjust="spacingAndGlyphs">16.482</text>
<text x="597.8" y="241.75" font-family="Liberation Mono" font-size="6.5" fill="#000" stroke="#000" stroke-width="0.0" textLength="18.0" lengthAdjust="spacingAndGlyphs">16.538</text>
<text x="631.8" y="241.75" font-family="Liberation Mono" font-size="6.5" fill="#000" stroke="#000" stroke-width="0.0" textLength="18.0" lengthAdjust="spacingAndGlyphs">16.427</text>
<text x="665.8" y="241.75" font-family="Liberation Mono" font-size="6.5" fill="#000" stroke="#000" stroke-width="0.0" textLength="24.0" lengthAdjust="spacingAndGlyphs">213.3687</text>
<text x="528.5" y="250.94" font-family="Liberation Mono" font-size="6.5" fill="#000" stroke="#000" stroke-width="0.0" textLength="9.0" lengthAdjust="spacingAndGlyphs">5T2</text>
<text x="563.3" y="250.94" font-family="Liberation Mono" font-size="6.5" fill="#000" stroke="#000" stroke-width="0.0" textLength="18.0" lengthAdjust="spacingAndGlyphs">16.677</text>
<text x="597.8" y="250.94" font-family="Liberation Mono" font-size="6.5" fill="#000" stroke="#000" stroke-width="0.0" textLength="18.0" lengthAdjust="spacingAndGlyphs">16.733</text>
<text x="631.8" y="250.94" font-family="Liberation Mono" font-size="6.5" fill="#000" stroke="#000" stroke-width="0.0" textLength="18.0" lengthAdjust="spacingAndGlyphs">16.621</text>
<text x="665.8" y="250.94" font-family="Liberation Mono" font-size="6.5" fill="#000" stroke="#000" stroke-width="0.0" textLength="24.0" lengthAdjust="spacingAndGlyphs">218.4368</text>
<text x="528.5" y="260.14" font-family="Liberation Mono" font-size="6.5" fill="#000" stroke="#000" stroke-width="0.0" textLength="9.0" lengthAdjust="spacingAndGlyphs">6T2</text>
<text x="563.3" y="260.14" font-family="Liberation Mono" font-size="6.5" fill="#000" stroke="#000" stroke-width="0.0" textLength="18.0" lengthAdjust="spacingAndGlyphs">16.477</text>
<text x="597.8" y="260.14" font-family="Liberation Mono" font-size="6.5" fill="#000" stroke="#000" stroke-width="0.0" textLength="18.0" lengthAdjust="spacingAndGlyphs">16.583</text>
<text x="631.8" y="260.14" font-family="Liberation Mono" font-size="6.5" fill="#000" stroke="#000" stroke-width="0.0" textLength="18.0" lengthAdjust="spacingAndGlyphs">16.372</text>
<text x="665.8" y="260.14" font-family="Liberation Mono" font-size="6.5" fill="#000" stroke="#000" stroke-width="0.0" textLength="24.0" lengthAdjust="spacingAndGlyphs">213.2325</text>
<text x="528.5" y="269.34" font-family="Liberation Mono" font-size="6.5" fill="#000" stroke="#000" stroke-width="0.0" textLength="9.0" lengthAdjust="spacingAndGlyphs">6S1</text>
<text x="563.3" y="269.34" font-family="Liberation Mono" font-size="6.5" fill="#000" stroke="#000" stroke-width="0.0" textLength="18.0" lengthAdjust="spacingAndGlyphs">15.249</text>
<text x="597.8" y="269.34" font-family="Liberation Mono" font-size="6.5" fill="#000" stroke="#000" stroke-width="0.0" textLength="18.0" lengthAdjust="spacingAndGlyphs">15.356</text>
<text x="631.8" y="269.34" font-family="Liberation Mono" font-size="6.5" fill="#000" stroke="#000" stroke-width="0.0" textLength="18.0" lengthAdjust="spacingAndGlyphs">15.142</text>
<text x="665.8" y="269.34" font-family="Liberation Mono" font-size="6.5" fill="#000" stroke="#000" stroke-width="0.0" textLength="24.0" lengthAdjust="spacingAndGlyphs">182.6233</text>
<text x="528.5" y="278.53" font-family="Liberation Mono" font-size="6.5" fill="#000" stroke="#000" stroke-width="0.0" textLength="9.0" lengthAdjust="spacingAndGlyphs">6T1</text>
<text x="563.3" y="278.53" font-family="Liberation Mono" font-size="6.5" fill="#000" stroke="#000" stroke-width="0.0" textLength="18.0" lengthAdjust="spacingAndGlyphs">15.967</text>
<text x="597.8" y="278.53" font-family="Liberation Mono" font-size="6.5" fill="#000" stroke="#000" stroke-width="0.0" textLength="18.0" lengthAdjust="spacingAndGlyphs">16.112</text>
<text x="631.8" y="278.53" font-family="Liberation Mono" font-size="6.5" fill="#000" stroke="#000" stroke-width="0.0" textLength="18.0" lengthAdjust="spacingAndGlyphs">15.823</text>
<text x="665.8" y="278.53" font-family="Liberation Mono" font-size="6.5" fill="#000" stroke="#000" stroke-width="0.0" textLength="24.0" lengthAdjust="spacingAndGlyphs">200.2290</text>
<text x="528.5" y="287.73" font-family="Liberation Mono" font-size="6.5" fill="#000" stroke="#000" stroke-width="0.0" textLength="9.0" lengthAdjust="spacingAndGlyphs">6S2</text>
<text x="563.3" y="287.73" font-family="Liberation Mono" font-size="6.5" fill="#000" stroke="#000" stroke-width="0.0" textLength="18.0" lengthAdjust="spacingAndGlyphs">16.487</text>
<text x="597.8" y="287.73" font-family="Liberation Mono" font-size="6.5" fill="#000" stroke="#000" stroke-width="0.0" textLength="18.0" lengthAdjust="spacingAndGlyphs">16.548</text>
<text x="631.8" y="287.73" font-family="Liberation Mono" font-size="6.5" fill="#000" stroke="#000" stroke-width="0.0" textLength="18.0" lengthAdjust="spacingAndGlyphs">16.425</text>
<text x="665.8" y="287.73" font-family="Liberation Mono" font-size="6.5" fill="#000" stroke="#000" stroke-width="0.0" textLength="24.0" lengthAdjust="spacingAndGlyphs">213.4763</text>
<text x="528.5" y="296.93" font-family="Liberation Mono" font-size="6.5" fill="#000" stroke="#000" stroke-width="0.0" textLength="6.0" lengthAdjust="spacingAndGlyphs">T1</text>
<text x="534.7" y="296.93" font-family="Liberation Sans" font-size="6.4" fill="#000">均值</text>
<text x="563.3" y="296.93" font-family="Liberation Mono" font-size="6.5" fill="#000" stroke="#000" stroke-width="0.0" textLength="18.0" lengthAdjust="spacingAndGlyphs">16.059</text>
<text x="597.8" y="296.93" font-family="Liberation Mono" font-size="6.5" fill="#000" stroke="#000" stroke-width="0.0" textLength="18.0" lengthAdjust="spacingAndGlyphs">16.221</text>
<text x="631.8" y="296.93" font-family="Liberation Mono" font-size="6.5" fill="#000" stroke="#000" stroke-width="0.0" textLength="18.0" lengthAdjust="spacingAndGlyphs">15.899</text>
<text x="665.8" y="296.93" font-family="Liberation Mono" font-size="6.5" fill="#000" stroke="#000" stroke-width="0.0" textLength="24.0" lengthAdjust="spacingAndGlyphs">202.5871</text>
<text x="528.5" y="306.12" font-family="Liberation Mono" font-size="6.5" fill="#000" stroke="#000" stroke-width="0.0" textLength="6.0" lengthAdjust="spacingAndGlyphs">T1</text>
<text x="534.7" y="306.12" font-family="Liberation Sans" font-size="6.4" fill="#000">标准差</text>
<text x="563.3" y="306.12" font-family="Liberation Mono" font-size="6.5" fill="#000" stroke="#000" stroke-width="0.0" textLength="15.0" lengthAdjust="spacingAndGlyphs">0.156</text>
<text x="597.8" y="306.12" font-family="Liberation Mono" font-size="6.5" fill="#000" stroke="#000" stroke-width="0.0" textLength="15.0" lengthAdjust="spacingAndGlyphs">0.131</text>
<text x="631.8" y="306.12" font-family="Liberation Mono" font-size="6.5" fill="#000" stroke="#000" stroke-width="0.0" textLength="15.0" lengthAdjust="spacingAndGlyphs">0.186</text>
<text x="665.8" y="306.12" font-family="Liberation Mono" font-size="6.5" fill="#000" stroke="#000" stroke-width="0.0" textLength="18.0" lengthAdjust="spacingAndGlyphs">3.9717</text>
<text x="528.5" y="315.32" font-family="Liberation Mono" font-size="6.5" fill="#000" stroke="#000" stroke-width="0.0" textLength="6.0" lengthAdjust="spacingAndGlyphs">S2</text>
<text x="534.7" y="315.32" font-family="Liberation Sans" font-size="6.4" fill="#000">均值</text>
<text x="563.3" y="315.32" font-family="Liberation Mono" font-size="6.5" fill="#000" stroke="#000" stroke-width="0.0" textLength="18.0" lengthAdjust="spacingAndGlyphs">16.484</text>
<text x="597.8" y="315.32" font-family="Liberation Mono" font-size="6.5" fill="#000" stroke="#000" stroke-width="0.0" textLength="18.0" lengthAdjust="spacingAndGlyphs">16.686</text>
<text x="631.8" y="315.32" font-family="Liberation Mono" font-size="6.5" fill="#000" stroke="#000" stroke-width="0.0" textLength="18.0" lengthAdjust="spacingAndGlyphs">16.285</text>
<text x="665.8" y="315.32" font-family="Liberation Mono" font-size="6.5" fill="#000" stroke="#000" stroke-width="0.0" textLength="24.0" lengthAdjust="spacingAndGlyphs">213.4345</text>
<text x="528.5" y="324.52" font-family="Liberation Mono" font-size="6.5" fill="#000" stroke="#000" stroke-width="0.0" textLength="6.0" lengthAdjust="spacingAndGlyphs">S2</text>
<text x="534.7" y="324.52" font-family="Liberation Sans" font-size="6.4" fill="#000">标准差</text>
<text x="563.3" y="324.52" font-family="Liberation Mono" font-size="6.5" fill="#000" stroke="#000" stroke-width="0.0" textLength="15.0" lengthAdjust="spacingAndGlyphs">0.188</text>
<text x="597.8" y="324.52" font-family="Liberation Mono" font-size="6.5" fill="#000" stroke="#000" stroke-width="0.0" textLength="15.0" lengthAdjust="spacingAndGlyphs">0.143</text>
<text x="631.8" y="324.52" font-family="Liberation Mono" font-size="6.5" fill="#000" stroke="#000" stroke-width="0.0" textLength="15.0" lengthAdjust="spacingAndGlyphs">0.302</text>
<text x="665.8" y="324.52" font-family="Liberation Mono" font-size="6.5" fill="#000" stroke="#000" stroke-width="0.0" textLength="18.0" lengthAdjust="spacingAndGlyphs">4.8978</text>
<text x="528.5" y="333.72" font-family="Liberation Mono" font-size="6.5" fill="#000" stroke="#000" stroke-width="0.0" textLength="6.0" lengthAdjust="spacingAndGlyphs">T2</text>
<text x="534.7" y="333.72" font-family="Liberation Sans" font-size="6.4" fill="#000">均值</text>
<text x="563.3" y="333.72" font-family="Liberation Mono" font-size="6.5" fill="#000" stroke="#000" stroke-width="0.0" textLength="18.0" lengthAdjust="spacingAndGlyphs">16.629</text>
<text x="597.8" y="333.72" font-family="Liberation Mono" font-size="6.5" fill="#000" stroke="#000" stroke-width="0.0" textLength="18.0" lengthAdjust="spacingAndGlyphs">16.731</text>
<text x="631.8" y="333.72" font-family="Liberation Mono" font-size="6.5" fill="#000" stroke="#000" stroke-width="0.0" textLength="18.0" lengthAdjust="spacingAndGlyphs">16.527</text>
<text x="665.8" y="333.72" font-family="Liberation Mono" font-size="6.5" fill="#000" stroke="#000" stroke-width="0.0" textLength="24.0" lengthAdjust="spacingAndGlyphs">217.2493</text>
<text x="528.5" y="342.91" font-family="Liberation Mono" font-size="6.5" fill="#000" stroke="#000" stroke-width="0.0" textLength="6.0" lengthAdjust="spacingAndGlyphs">T2</text>
<text x="534.7" y="342.91" font-family="Liberation Sans" font-size="6.4" fill="#000">标准差</text>
<text x="563.3" y="342.91" font-family="Liberation Mono" font-size="6.5" fill="#000" stroke="#000" stroke-width="0.0" textLength="15.0" lengthAdjust="spacingAndGlyphs">0.306</text>
<text x="597.8" y="342.91" font-family="Liberation Mono" font-size="6.5" fill="#000" stroke="#000" stroke-width="0.0" textLength="15.0" lengthAdjust="spacingAndGlyphs">0.280</text>
<text x="631.8" y="342.91" font-family="Liberation Mono" font-size="6.5" fill="#000" stroke="#000" stroke-width="0.0" textLength="15.0" lengthAdjust="spacingAndGlyphs">0.334</text>
<text x="665.8" y="342.91" font-family="Liberation Mono" font-size="6.5" fill="#000" stroke="#000" stroke-width="0.0" textLength="18.0" lengthAdjust="spacingAndGlyphs">8.1008</text>
<text x="528.5" y="352.11" font-family="Liberation Mono" font-size="6.5" fill="#000" stroke="#000" stroke-width="0.0" textLength="6.0" lengthAdjust="spacingAndGlyphs">S1</text>
<text x="534.7" y="352.11" font-family="Liberation Sans" font-size="6.4" fill="#000">均值</text>
<text x="563.3" y="352.11" font-family="Liberation Mono" font-size="6.5" fill="#000" stroke="#000" stroke-width="0.0" textLength="18.0" lengthAdjust="spacingAndGlyphs">15.334</text>
<text x="597.8" y="352.11" font-family="Liberation Mono" font-size="6.5" fill="#000" stroke="#000" stroke-width="0.0" textLength="18.0" lengthAdjust="spacingAndGlyphs">15.451</text>
<text x="631.8" y="352.11" font-family="Liberation Mono" font-size="6.5" fill="#000" stroke="#000" stroke-width="0.0" textLength="18.0" lengthAdjust="spacingAndGlyphs">15.219</text>
<text x="665.8" y="352.11" font-family="Liberation Mono" font-size="6.5" fill="#000" stroke="#000" stroke-width="0.0" textLength="24.0" lengthAdjust="spacingAndGlyphs">184.6830</text>
<text x="528.5" y="361.31" font-family="Liberation Mono" font-size="6.5" fill="#000" stroke="#000" stroke-width="0.0" textLength="6.0" lengthAdjust="spacingAndGlyphs">S1</text>
<text x="534.7" y="361.31" font-family="Liberation Sans" font-size="6.4" fill="#000">标准差</text>
<text x="563.3" y="361.31" font-family="Liberation Mono" font-size="6.5" fill="#000" stroke="#000" stroke-width="0.0" textLength="15.0" lengthAdjust="spacingAndGlyphs">0.072</text>
<text x="597.8" y="361.31" font-family="Liberation Mono" font-size="6.5" fill="#000" stroke="#000" stroke-width="0.0" textLength="15.0" lengthAdjust="spacingAndGlyphs">0.058</text>
<text x="631.8" y="361.31" font-family="Liberation Mono" font-size="6.5" fill="#000" stroke="#000" stroke-width="0.0" textLength="15.0" lengthAdjust="spacingAndGlyphs">0.092</text>
<text x="665.8" y="361.31" font-family="Liberation Mono" font-size="6.5" fill="#000" stroke="#000" stroke-width="0.0" textLength="18.0" lengthAdjust="spacingAndGlyphs">1.7398</text>
</svg>
<!-- status bar -->
<div style="left:0;top:372.6px;width:700px;height:1px;background:#a4a8ae"></div>
<div style="left:0;top:373.6px;width:700px;height:11.4px;background:#f3f0ef"></div>
<div style="left:0;top:384.8px;width:700px;height:1px;background:#9ea2aa"></div>
<div style="left:0;top:385.8px;width:700px;height:14.2px;background:#eaeaea"></div>
<div class="sp" style="left:1px;width:152px"></div>
<div class="st" style="left:64px">移动图像</div>
<div class="sp" style="left:155px;width:39px"></div>
<div class="st" style="left:165.5px">2.03s</div>
<div class="sp" style="left:196px;width:12px"></div>
<div class="st" style="left:196.6px">JPG</div>
<div class="sp" style="left:210px;width:31px"></div>
<div class="st" style="left:214.3px">20.9Mb</div>
<div class="sp" style="left:242px;width:59px"></div>
<div class="st" style="left:249.3px">3320×2196×24</div>
<div class="sp" style="left:302px;width:82px"></div>
<div class="st" style="left:307px">当前 1 mm = 11.81 像素</div>
<svg width="700" height="60" viewBox="0 0 700 60" style="position:absolute;left:0;top:0">
<rect x="1" y="26.5" width="0.9" height="0.9" fill="#9aa4b4"/>
<rect x="1" y="28.5" width="0.9" height="0.9" fill="#9aa4b4"/>
<rect x="1" y="30.5" width="0.9" height="0.9" fill="#9aa4b4"/>
<rect x="1" y="32.5" width="0.9" height="0.9" fill="#9aa4b4"/>
<path d="M6.5 27h3l1 1h2v5.5h-6z" fill="#b8b030"/>
<path d="M7 29.5h6.5l-1.2 4h-5.8z" fill="#e0dc40"/>
<path d="M10 26h3v3h-3z" fill="#607020" opacity="0.7"/>
<path d="M24.3 27.5a3.6 3.6 0 1 0 0.3 5.2" fill="none" stroke="#8a9098" stroke-width="1.5"/>
<ellipse cx="22.5" cy="32.8" rx="2.6" ry="1" fill="#a0a8b0"/>
<path d="M30.5 27h4l2.5 2.5v4h-6.5z" fill="#206060"/>
<path d="M32.5 28.5h3v3h-3z" fill="#60b8b0"/>
<path d="M41.5 26.5h7.5v7.5h-7.5z" fill="#404888"/>
<path d="M43 26.5h4.5v3h-4.5z" fill="#c8cce8"/>
<path d="M43.5 31h3.5v3h-3.5z" fill="#e8e8f0"/>
<path d="M53.5 26.5h7v7.5h-7z" fill="none" stroke="#5a6080" stroke-width="1.2"/>
<path d="M55.5 28.5h3v3h-3z" fill="#c0c8e0"/>
<rect x="63.5" y="25" width="0.6" height="9" fill="#c8d0dc"/>
<path d="M67 30.5l2-2.5h5l2 2.5z" fill="#70c0c0"/>
<path d="M67 30.5h9v2.5h-9z" fill="#206868"/>
<path d="M80 31.5l5.5-5 2 2-5.5 5z" fill="#dcd040" stroke="#a09020" stroke-width="0.5"/>
<path d="M92.5 27h4.5v6.8h-4.5z" fill="#d0e8d0" stroke="#405088" stroke-width="1"/>
<path d="M97 29.5h3l-1 1z" fill="#506080"/>
<text x="103" y="32.5" font-family="Liberation Sans" font-size="7.5" font-weight="bold" fill="#405888" textLength="8" lengthAdjust="spacingAndGlyphs">Aa</text>
<rect x="116.5" y="24.2" width="11" height="11" fill="#fcfdff" stroke="#98a4b4" stroke-width="0.6"/>
<path d="M119.6 34L118.2 31.2L118.4 30.1L119.5 30.6L119.5 27.6L120.3 27.1L121 27.6L121 26.6L121.8 26.1L122.6 26.6L122.6 27.1L123.4 26.9L124.1 27.4L124.1 28.1L124.9 27.9L125.6 28.4L125.6 31.6L125 34Z" fill="#fff" stroke="#1a1a1a" stroke-width="0.8" stroke-linejoin="round"/>
<path d="M121 27.6V30.3M122.6 27.1V30.2M124.1 28.1V30.4" stroke="#1a1a1a" stroke-width="0.6"/>
<rect x="130.7" y="26.7" width="6.6" height="6.3" fill="#e0dc70" stroke="#404030" stroke-width="0.9"/>
<rect x="132.5" y="28.5" width="3" height="2.7" fill="#f0f0a0"/>
<circle cx="146" cy="28.8" r="2.3" fill="#a8c8e8" stroke="#6088b0" stroke-width="0.7"/>
<path d="M147.8 30.6l2.8 2.8" stroke="#806040" stroke-width="1.3"/>
<circle cx="157.5" cy="28.8" r="2.3" fill="#a8c8e8" stroke="#6088b0" stroke-width="0.7"/>
<path d="M159.3 30.6l2.8 2.8" stroke="#806040" stroke-width="1.3"/>
<path d="M156.0 28.8h3M157.5 27.3v3" stroke="#2050a0" stroke-width="0.7"/>
<circle cx="169" cy="28.8" r="2.3" fill="#d8e0e8" stroke="#6088b0" stroke-width="0.7"/>
<path d="M170.8 30.6l2.8 2.8" stroke="#806040" stroke-width="1.3"/>
<path d="M167.5 28.8h3" stroke="#606870" stroke-width="0.7"/>
<ellipse cx="181" cy="30.5" rx="3.8" ry="2" fill="#105838"/>
<ellipse cx="181" cy="28.5" rx="2.5" ry="1.2" fill="#70b090"/>
<path d="M193 33.5l2-6 2.5-1 2.5 6z" fill="#e0d040"/>
<path d="M193 33.5l1-4" stroke="#303838" stroke-width="0.9"/><path d="M198 32.5h2" stroke="#202020" stroke-width="0.9"/>
<path d="M205 33.5l2-6 2.5-1 2.5 6z" fill="#b898b8"/>
<path d="M205 33.5l1-4" stroke="#405048" stroke-width="0.9"/><path d="M210 32.5h2" stroke="#402030" stroke-width="0.9"/>
<path d="M215.5 33.8l2.2-4.5 5.5-1.5-2 3z" fill="#8a9aa8"/><path d="M220 31.5l3.5-3" stroke="#404858" stroke-width="1"/>
<path d="M219 27l1 1.5M222.5 26l0.5 2M217 28.5l1.5 1" stroke="#405060" stroke-width="0.8"/>
<rect x="227.5" y="28.5" width="7.5" height="3.5" fill="#7888a0"/>
<rect x="239.3" y="25" width="0.6" height="9" fill="#d8dce4"/>
<rect x="242.3" y="26.7" width="7.5" height="6.8" fill="#c8d0c8" stroke="#707878" stroke-width="0.9"/>
<path d="M244 32l4-4" stroke="#f0f0f0" stroke-width="1"/>
<path d="M256 27l3.6 2.6-3.6 2.6z" fill="#308838"/>
<path d="M336 29.3h3l-1.5 1.6z" fill="#222"/>
<path d="M380.3 29.3h3l-1.5 1.6z" fill="#222"/>
<circle cx="347.5" cy="29.3" r="3.8" fill="#f0c890"/>
<circle cx="347.5" cy="29.3" r="1.6" fill="#e89040"/>
<path d="M345.5 33.3h4" stroke="#505050" stroke-width="0.8"/>
<path d="M356 30l2.3 2.5 4.7-5" fill="none" stroke="#58a058" stroke-width="1.8"/>
<rect x="368.5" y="26" width="8.5" height="7.3" fill="#f4eeb0"/>
<text x="370.8" y="32.3" font-family="Liberation Sans" font-size="6.5" font-weight="bold" fill="#202020">?</text>
<path d="M528.8 50.2h4.5M528.8 52.3h4M528.8 54.4h5" stroke="#3a4050" stroke-width="0.6"/>
<path d="M532.5 53l3.2-3.2" stroke="#c07898" stroke-width="1.1"/><path d="M534 49.3h2.3v2.3z" fill="#c07898"/>
<path d="M541 50.5l2-2 0 1.5c3 0 4.5 1.5 4.5 3.5s-2 2.5-4 2.5" fill="none" stroke="#e0a088" stroke-width="1.3"/>
<path d="M553.5 48.3h5l2 2v5.2h-7z" fill="#d8f0d8" stroke="#58a068" stroke-width="0.7"/>
<path d="M555 51h4v3.5h-4z" fill="#40a050"/>
</svg>
</body></html>
